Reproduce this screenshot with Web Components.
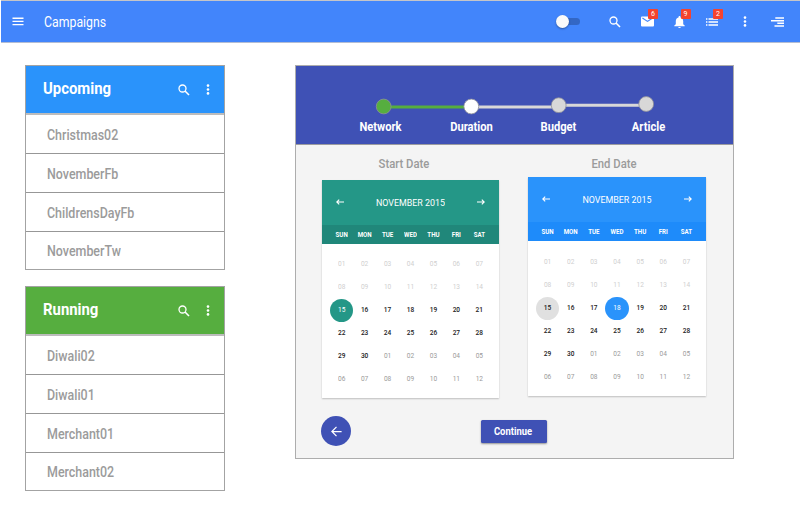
<!DOCTYPE html>
<html lang="en">
<head>
<meta charset="utf-8">
<title>Campaigns</title>
<style>
  body { margin: 0; background: #fff; font-family: Roboto, "Liberation Sans", sans-serif; }
</style>
</head>
<body>
<campaign-page></campaign-page>
<script>
const sheet = css => `<style>:host{box-sizing:border-box}*{box-sizing:border-box}${css}</style>`;
const define = (name, render) => customElements.define(name, class extends HTMLElement {
  connectedCallback() {
    if (this.shadowRoot) return;
    const t = document.createElement('template');
    t.innerHTML = render(this);
    this.attachShadow({ mode: 'open' }).append(t.content.cloneNode(true));
  }
});

/* name: [width, height, markup] */
const icons = {
  menu: [12, 9, '<path d="M.5 1.200h11M.5 4.400h11M.5 7.600h11" stroke="currentColor" stroke-width="1.400"/>'],
  search: [12, 12, '<circle cx="4.500" cy="4.500" r="3.500" fill="none" stroke="currentColor" stroke-width="1.300"/><path d="M7 7L11 11" stroke="currentColor" stroke-width="1.600"/>'],
  mail: [13, 11, '<rect x="0" y=".4" width="13" height="10.2" rx="1" fill="currentColor"/><path d="M1.4 2L6.5 5.4 11.6 2" fill="none" stroke="#4285fb" stroke-width="1.2"/>'],
  bell: [11, 12, '<path d="M5.5 0c.6 0 1 .4 1 .9v.5C8.300 1.800 9.200 3.300 9.200 5.100v3.100l1.500 1.400v.7H.3v-.7l1.500-1.400V5.100c0-1.800.9-3.300 2.700-3.700V.9c0-.5.4-.9 1-.9z" fill="currentColor"/><path d="M4.200 10.900h2.600a1.300 1.100 0 0 1-2.600 0z" fill="currentColor"/>'],
  list: [12, 8, '<path d="M0 1h1.400M2.500 1H12M0 4h1.400M2.500 4H12M0 7h1.400M2.500 7H12" stroke="currentColor" stroke-width="1.450"/>'],
  dots: [4, 11, '<g fill="currentColor"><circle cx="2" cy="1.600" r="1.300"/><circle cx="2" cy="5.500" r="1.300"/><circle cx="2" cy="9.400" r="1.300"/></g>'],
  right: [13, 10, '<path d="M4.300 1H13M0 3.700h13M6.300 6.300H13M3.500 9H13" stroke="currentColor" stroke-width="1.500"/>'],
  prev: [8, 6, '<path d="M8 3H1M3.200.6L.8 3l2.400 2.400" fill="none" stroke="currentColor" stroke-width="1.100"/>'],
  next: [8, 6, '<path d="M0 3h7M4.800.6L7.200 3 4.800 5.400" fill="none" stroke="currentColor" stroke-width="1.100"/>'],
  back: [11, 11, '<path d="M10.600 5.500H1M5.500.9L.9 5.500l4.600 4.600" fill="none" stroke="currentColor" stroke-width="1.250"/>']
};

define('ui-icon', el => {
  const [w, h, m] = icons[el.getAttribute('name')];
  return sheet(`:host{display:block;flex:none;width:${w}px;height:${h}px}svg{display:block}`) +
    `<svg width="${w}" height="${h}" viewBox="0 0 ${w} ${h}">${m}</svg>`;
});

define('ui-toggle', () => sheet(`
  :host{display:flex;align-items:center;width:24px;height:13px}
  i{width:13px;height:13px;border-radius:50%;background:#fafafa;box-shadow:0 1px 2px rgba(0,0,0,.35);z-index:1}
  b{width:17px;height:7px;margin-left:-6px;border-radius:4px;background:#3367c5}
`) + `<i></i><b></b>`);

define('bar-action', el => sheet(`
  :host{display:grid;place-items:center;width:32.5px;height:24px;position:relative}
  span{position:absolute;left:17px;top:-.5px;width:10px;height:10px;border-radius:1px;background:#f4432f;color:#fff;
    font-size:7px;line-height:10px;text-align:center}
`) + `<slot></slot>` + (el.hasAttribute('count') ? `<span>${el.getAttribute('count')}</span>` : ''));

define('app-bar', () => sheet(`
  :host{display:flex;align-items:center;height:43px;margin-left:1px;padding:0 6.5px 0 11px;
    background:#4285fb;color:#fff;border-top:1px solid #c5c5c8;border-bottom:1px solid #b3bdd3}
  h1{flex:1;margin:0 0 0 20px;font-size:12.3px;font-weight:400;line-height:16px;transform:scaleY(1.14)}
  ui-toggle{margin-right:19px}
  ui-icon[name=menu]{margin-top:-1px}
`) + `<ui-icon name="menu"></ui-icon><h1><slot></slot></h1><ui-toggle></ui-toggle>
  <bar-action><ui-icon name="search"></ui-icon></bar-action>
  <bar-action count="6"><ui-icon name="mail"></ui-icon></bar-action>
  <bar-action count="9"><ui-icon name="bell"></ui-icon></bar-action>
  <bar-action count="2"><ui-icon name="list"></ui-icon></bar-action>
  <bar-action><ui-icon name="dots"></ui-icon></bar-action>
  <bar-action><ui-icon name="right"></ui-icon></bar-action>`);

define('campaign-item', () => sheet(`
  :host{display:flex;align-items:center;padding-left:21px;font-size:12.450px;font-weight:500;color:#9b9b9b;border-top:1px solid #979797}
  :host(:first-child){border-top:0}
  span{transform:scaleY(1.14)}
`) + `<span><slot></slot></span>`);

define('campaign-list', el => sheet(`
  :host{display:flex;flex-direction:column;width:200px;height:205px;border:1px solid #a3a3a3;background:#fff}
  header{display:flex;align-items:center;height:49px;padding:0 14.500px 2px 17px;background:var(--tone);color:#fff;border-bottom:2px solid #bcbcbc}
  h2{flex:1;margin:0;font-size:14.900px;font-weight:700;line-height:20px;transform:scaleY(1.08)}
  ui-icon{margin-top:2px}
  ui-icon[name=search]{margin-right:16px}
  section{display:grid;grid-template-rows:38px 39px 39px 38px}
`) + `<header><h2>${el.getAttribute('heading')}</h2><ui-icon name="search"></ui-icon><ui-icon name="dots"></ui-icon></header>
  <section><slot></slot></section>`);

define('step-bar', () => sheet(`
  :host{display:block;height:79px;padding-top:29px;background:#3f51b5;color:#fff;border-bottom:1px solid #9b9b9f}
  svg{display:block;margin-left:79px}
  div{display:grid;grid-template-columns:89px 93px 81px 99px;margin:4.500px 0 0 40px;font-size:11.150px;font-weight:700;line-height:16px;text-align:center}
  span{transform:scaleY(1.08)}
`) + `<svg width="284" height="20" viewBox="375 95 284 20">
    <g fill="none" stroke-width="3">
      <path d="M384 106.900H471" stroke="#56ae3f"/><path d="M471 106.900H559M559 105.300H646" stroke="#d8d8d8"/></g>
    <g stroke="#8e8f98" stroke-width=".8">
      <circle cx="383.700" cy="106.500" r="7.400" fill="#56ae3f"/><circle cx="471.300" cy="106.500" r="7.400" fill="#fff"/>
      <circle cx="558.700" cy="105.200" r="7.400" fill="#d8d8d8"/><circle cx="646.200" cy="104" r="7.400" fill="#d8d8d8"/></g>
  </svg><div><span>Network</span><span>Duration</span><span>Budget</span><span>Article</span></div>`);

define('month-calendar', el => {
  const marks = Object.fromEntries((el.getAttribute('marks') || '').split(',').map(m => m.split(':')));
  let cells = '';
  for (let i = 1; i <= 42; i++) {
    const day = i > 30 ? i - 30 : i;
    const kind = i > 30 ? 'after' : i < 15 ? 'before' : (marks[i] || '');
    cells += `<span class="${kind}"><b>${String(day).padStart(2, '0')}</b></span>`;
  }
  return sheet(`
  :host{display:flex;flex-direction:column;background:#fff;box-shadow:0 1px 1.500px rgba(0,0,0,.22)}
  header{display:flex;align-items:center;justify-content:space-between;height:45.300px;padding:0 14px;background:var(--tone);color:#fff}
  h3{margin:1px 0 0;font-size:8.900px;font-weight:400;line-height:12px;transform:scaleY(1.12)}
  .week,.days{display:grid;grid-template-columns:repeat(7,var(--cell));justify-content:center;text-align:center}
  .week{height:19.200px;line-height:20px;background:var(--deep);color:#fff;font-size:6.150px;font-weight:700}
  .days{grid-auto-rows:var(--cell);padding:var(--lead) 0 0 0;line-height:var(--cell);font-size:6.550px;font-weight:500;color:#222}
  b{display:block;font-weight:inherit;transform:scaleY(1.15)}
  .before{color:#cfcfcf;font-weight:400}
  .after{color:#9a9a9a;font-weight:400}
  .on{background:var(--tone);color:#fff;border-radius:50%;font-weight:400}
  .from{background:#e0e0e0;border-radius:50%}
`) + `<header><ui-icon name="prev"></ui-icon><h3>NOVEMBER 2015</h3><ui-icon name="next"></ui-icon></header>
  <div class="week">${['SUN','MON','TUE','WED','THU','FRI','SAT'].map(d => `<span><b>${d}</b></span>`).join('')}</div>
  <div class="days">${cells}</div>`;
});

define('date-field', () => sheet(`
  :host{display:flex;flex-direction:column}
  label{font-size:11.300px;font-weight:500;line-height:16px;color:#9b9b9b;text-align:center;transform:scaleY(1.06)}
`) + `<label><slot name="label"></slot></label><slot></slot>`);

define('duration-card', () => sheet(`
  :host{display:flex;flex-direction:column;width:439px;height:394px;background:#f4f4f4;border:1px solid #adadad}
  .dates{display:flex;align-items:flex-start;height:253px;padding:12px 0 0 26px}
  .end{margin-left:29px}
  .start [slot]{margin-right:13px}.end [slot]{margin-right:6px}
  .start month-calendar{width:177px;height:218.500px;margin-top:6.800px;--tone:#249787;--deep:#20877a;--cell:22.950px;--lead:8.700px}
  .end month-calendar{width:178px;height:219.500px;margin-top:3.800px;--tone:#2a93fb;--deep:#1e8bfa;--cell:23.150px;--lead:9.300px}
  footer{display:flex;align-items:center;margin-top:18px;padding-left:25px}
  button{border:0;padding:0;color:#fff;background:#3f51b5;font:700 9.450px Roboto,sans-serif}
  .back{display:grid;place-items:center;width:30px;height:30px;border-radius:50%}
  .go{width:66px;height:23px;margin-left:130px;padding:1px 2px 0 0;border-radius:1.500px;box-shadow:0 1px 2px rgba(0,0,0,.4)}
  .go span{display:block;transform:scaleY(1.06)}
`) + `<step-bar></step-bar>
  <div class="dates">
    <date-field class="start"><span slot="label">Start Date</span><month-calendar marks="15:on"></month-calendar></date-field>
    <date-field class="end"><span slot="label">End Date</span><month-calendar marks="15:from,18:on"></month-calendar></date-field>
  </div>
  <footer><button class="back" aria-label="Back"><ui-icon name="back"></ui-icon></button><button class="go"><span>Continue</span></button></footer>`);

define('campaign-page', () => sheet(`
  :host{display:block;height:532px;overflow:hidden}
  main{display:flex;align-items:flex-start;gap:70px;padding:22px 0 0 25px}
  aside{display:flex;flex-direction:column;gap:16px}
`) + `<app-bar>Campaigns</app-bar>
  <main><aside>
    <campaign-list heading="Upcoming" style="--tone:#2a93fb">
      <campaign-item>Christmas02</campaign-item><campaign-item>NovemberFb</campaign-item>
      <campaign-item>ChildrensDayFb</campaign-item><campaign-item>NovemberTw</campaign-item>
    </campaign-list>
    <campaign-list heading="Running" style="--tone:#56ae3f">
      <campaign-item>Diwali02</campaign-item><campaign-item>Diwali01</campaign-item>
      <campaign-item>Merchant01</campaign-item><campaign-item>Merchant02</campaign-item>
    </campaign-list>
  </aside><duration-card></duration-card></main>`);
</script>
</body>
</html>
